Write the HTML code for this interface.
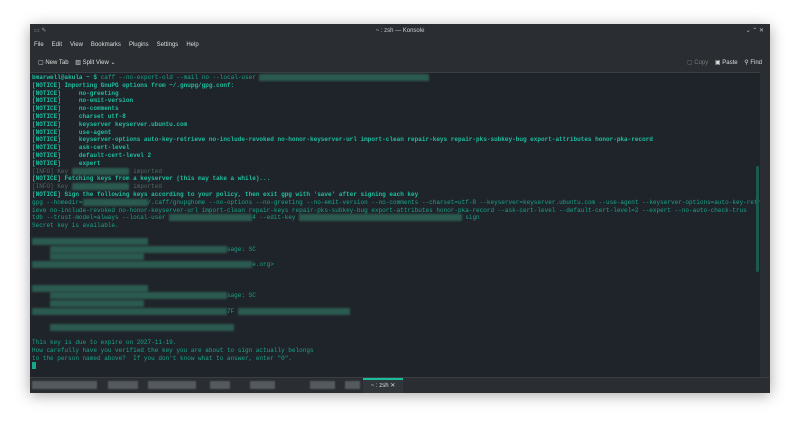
<!DOCTYPE html><html><head><style>
body{margin:0;width:800px;height:427px;background:#fff;overflow:hidden;font-family:"Liberation Sans",sans-serif}
.win{position:absolute;left:30px;top:24px;width:740px;height:368px;background:#2a2e32;box-shadow:0 3px 14px rgba(0,0,0,.35)}
.title{position:absolute;top:0;left:0;right:0;height:14px;color:#ccc;font-size:6px;text-align:center;line-height:14px}
.menu{position:absolute;top:18px;left:4px;font-size:6px;color:#ddd}
.menu span{margin-right:8px}
.tb{position:absolute;top:35px;font-size:6px;color:#ddd}
.term{position:absolute;left:0;top:48px;width:730px;height:305px;background:#1f232a;border-top:1px solid #3a3f44;overflow:hidden}
pre{margin:0;padding:1px 0 0 2px;font-family:"Liberation Mono",monospace;font-size:6.03px;line-height:7.8px;color:#18a589;white-space:pre}
b{color:#1fbf9f}
.i{color:#4e6a60}
.bl{background:#2f6a5a;color:transparent;filter:blur(1px);opacity:.8}
.sb{position:absolute;right:1px;top:93px;width:3px;height:106px;background:#1d5a4e;border-radius:2px}
.tabs{position:absolute;left:0;top:353px;width:740px;height:15px;background:#2a2e32;border-top:1px solid #3a3f44}
.t{position:absolute;top:3px;height:8px;background:#555a60;filter:blur(.8px)}
</style></head><body><div class="win">
<div class="title">~ : zsh — Konsole<span style="position:absolute;right:6px;color:#bbb">⌄ ⌃ ✕</span><span style="position:absolute;left:4px;color:#999">▭ ✎</span></div>
<div class="menu"><span>File</span><span>Edit</span><span>View</span><span>Bookmarks</span><span>Plugins</span><span>Settings</span><span>Help</span></div>
<div class="tb" style="left:8px">▢ New Tab &nbsp;&nbsp; ▥ Split View ⌄</div>
<div class="tb" style="right:8px"><span style="color:#777">▢ Copy</span> &nbsp;&nbsp; ▣ Paste &nbsp;&nbsp; ⚲ Find</div>
<div class="term"><pre><b>bmarwell@akula</b> <b>~ $</b> caff --no-export-old --mail no --local-user <span class="bl">XXXXXXXXXXXXXXXXXXXXXXXXXXXXXXXXXXXXXXXXXXXXXXX</span>
<b>[NOTICE] Importing GnuPG options from ~/.gnupg/gpg.conf:</b>
<b>[NOTICE]     no-greeting</b>
<b>[NOTICE]     no-emit-version</b>
<b>[NOTICE]     no-comments</b>
<b>[NOTICE]     charset utf-8</b>
<b>[NOTICE]     keyserver keyserver.ubuntu.com</b>
<b>[NOTICE]     use-agent</b>
<b>[NOTICE]     keyserver-options auto-key-retrieve no-include-revoked no-honor-keyserver-url import-clean repair-keys repair-pks-subkey-bug export-attributes honor-pka-record</b>
<b>[NOTICE]     ask-cert-level</b>
<b>[NOTICE]     default-cert-level 2</b>
<b>[NOTICE]     expert</b>
<span class="i">[INFO] Key <span class="bl">XXXXXXXXXXXXXXXX</span> imported</span>
<b>[NOTICE] Fetching keys from a keyserver (this may take a while)...</b>
<span class="i">[INFO] Key <span class="bl">XXXXXXXXXXXXXXXX</span> imported</span>
<b>[NOTICE] Sign the following keys according to your policy, then exit gpg with 'save' after signing each key</b>
gpg --homedir=<span class="bl">XXXXXXXXXXXXXXXXXX</span>/.caff/gnupghome --no-options --no-greeting --no-emit-version --no-comments --charset=utf-8 --keyserver=keyserver.ubuntu.com --use-agent --keyserver-options=auto-key-retr
ieve no-include-revoked no-honor-keyserver-url import-clean repair-keys repair-pks-subkey-bug export-attributes honor-pka-record --ask-cert-level --default-cert-level=2 --expert --no-auto-check-trus
tdb --trust-model=always --local-user <span class="bl">XXXXXXXXXXXXXXXXXXXXXXX</span>4 --edit-key <span class="bl">XXXXXXXXXXXXXXXXXXXXXXXXXXXXXXXXXXXXXXXXXXXXX</span> sign
Secret key is available.

<span class="bl">XXX  XXXXXXXXXXXXXXXXXXXXXXXXXXX</span>
     <span class="bl">XXXXXXXXXXXXXXXXXXXXXXXXXXXXXXXXXXXXXXXXXXXXXXXXX</span>sage: SC
     <span class="bl">XXXXXXXXXXXXXXXXXXXXXXXXXX</span>
<span class="bl">XXXXXXXXXXXXXXXXXXXXXXXXXXXXXXXXXXXXXXXXXXXXXXXXXXXXXXXXXXXXX</span>e.org&gt;


<span class="bl">XXX  XXXXXXXXXXXXXXXXXXXXXXXXXXX</span>
     <span class="bl">XXXXXXXXXXXXXXXXXXXXXXXXXXXXXXXXXXXXXXXXXXXXXXXXX</span>sage: SC
     <span class="bl">XXXXXXXXXXXXXXXXXXXXXXXXXX</span>
<span class="bl">XXXXXXXXXXXXXXXXXXXXXXXXXXXXXXXXXXXXXXXXXXXXXXXXXXXXXX</span>7F <span class="bl">XXXXXXXXXXXXXXXXXXXXXXXXXXXXXXX</span>

     <span class="bl">XXXXXXXXXXXXXXXXXXXXXXXXXXXXXXXXXXXXXXXXXXXXXXXXXXX</span>

This key is due to expire on 2027-11-19.
How carefully have you verified the key you are about to sign actually belongs
to the person named above?  If you don't know what to answer, enter "0".
<span style="background:#18a589"> </span></pre><div class="sb"></div></div>
<div class="tabs">
<div class="t" style="left:2px;width:65px"></div><div class="t" style="left:78px;width:30px"></div><div class="t" style="left:118px;width:48px"></div><div class="t" style="left:180px;width:20px"></div><div class="t" style="left:220px;width:25px"></div><div class="t" style="left:280px;width:25px"></div><div class="t" style="left:315px;width:15px"></div>
<div style="position:absolute;left:333px;top:0;width:40px;height:13px;border-top:2px solid #1abc9c;background:#31363b;color:#ddd;font-size:6px;line-height:13px;text-align:center">~ : zsh ✕</div>
</div>
</div></body></html>
